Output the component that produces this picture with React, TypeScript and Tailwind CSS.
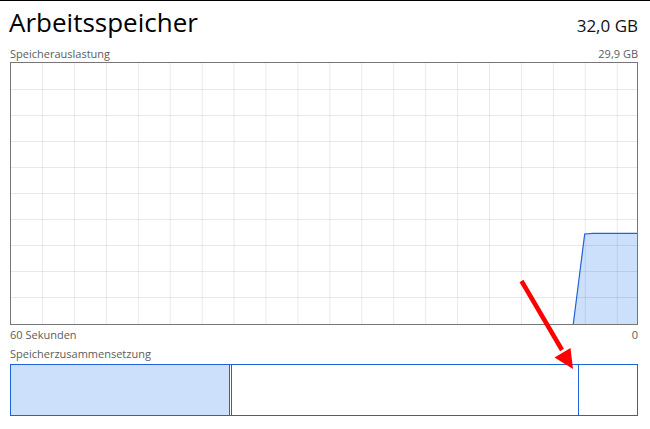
import React from "react";

const font = { fontFamily: '"Open Sans", "Noto Sans", sans-serif' };

const GRID_X = Array.from({ length: 19 }, (_, i) => 31.5 + i * 31.93);
const GRID_Y = Array.from({ length: 9 }, (_, i) => 26 * (i + 1));

const UsageChart = () => {
  return (
    <div className="h-[263px] border border-[#767676] bg-white">
      <svg width="626" height="261" className="block">
        <polygon
          points="562.3,261 573.7,171 582,170.3 626,170.3 626,261"
          fill="#cce0fc"
        />
        {GRID_X.map((x) => (
          <line key={x} x1={x} y1={0} x2={x} y2={261} stroke="rgba(0,0,0,0.085)" strokeWidth={1} />
        ))}
        {GRID_Y.map((y) => (
          <line key={y} x1={0} y1={y + 0.5} x2={626} y2={y + 0.5} stroke="rgba(0,0,0,0.085)" strokeWidth={1} />
        ))}
        <polyline
          points="562.3,261 573.7,171 582,170.3 626,170.3"
          fill="none"
          stroke="#1f63d8"
          strokeWidth={1.2}
        />
      </svg>
    </div>
  );
};

const Composition = () => {
  return (
    <div className="flex h-[52px] border border-[#1f63d8]">
      {/* in use */}
      <div className="w-[219px] bg-[#cce0fc] border-r border-[#1f63d8]" />
      {/* modified */}
      <div className="w-[2px] border-r border-[#1f63d8]" />
      {/* standby */}
      <div className="w-[347px] border-r border-[#1f63d8]" />
      {/* free */}
      <div className="flex-1" />
    </div>
  );
};

export default function App() {
  return (
    <div
      className="relative w-[650px] h-[429px] overflow-hidden bg-white border-t border-black pl-[10px] pr-[12px]"
      style={font}
    >
      <div className="flex items-baseline justify-between h-[44px] pt-[1px]">
        <span className="text-[26px] leading-[40px] text-black -ml-[1px]">Arbeitsspeicher</span>
        <span className="text-[17px] text-[#111]">32,0 GB</span>
      </div>
      <div className="flex items-baseline justify-between h-[17px] text-[11px] leading-[17px] text-[#5c5c5c]">
        <span>Speicherauslastung</span>
        <span>29,9 GB</span>
      </div>
      <UsageChart />
      <div className="flex justify-between h-[19px] text-[11px] leading-[19px] text-[#5c5c5c]">
        <span>60 Sekunden</span>
        <span>0</span>
      </div>
      <div className="h-[20px] text-[11px] leading-[20px] text-[#5c5c5c]">Speicherzusammensetzung</div>
      <Composition />

      {/* annotation arrow */}
      <svg className="absolute left-0 top-0 pointer-events-none" width="650" height="429">
        <line x1="521.5" y1="280" x2="562" y2="349" stroke="#ff0000" strokeWidth="4.5" />
        <polygon points="573,368 554.5,356.5 570.5,347" fill="#ff0000" />
      </svg>
    </div>
  );
}
